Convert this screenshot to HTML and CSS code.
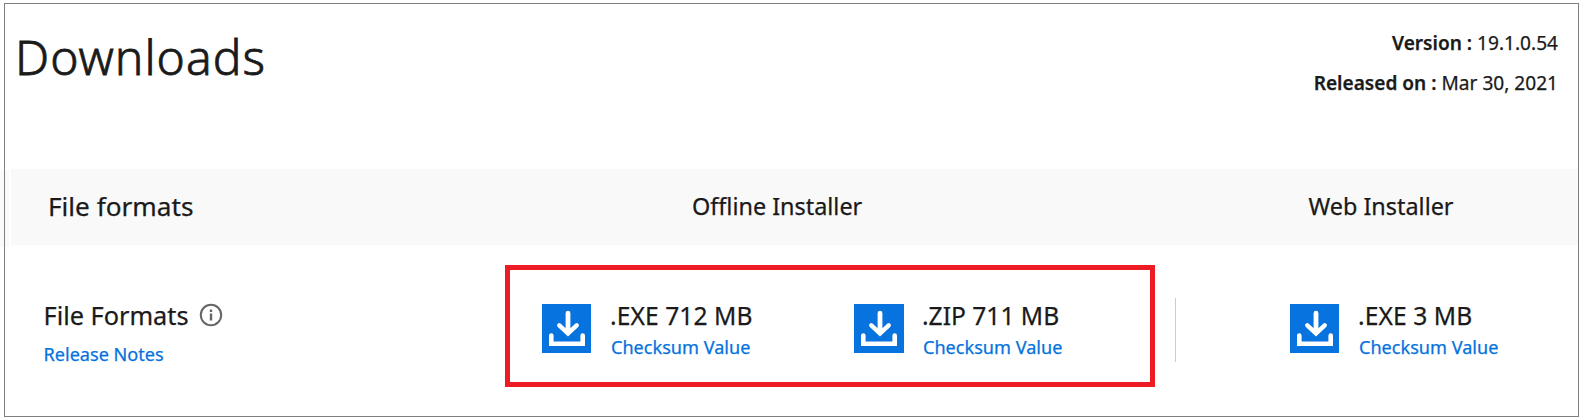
FILE: index.html
```html
<!DOCTYPE html>
<html lang="en">
<head>
<meta charset="utf-8">
<title>Downloads</title>
<link rel="stylesheet" href="styles.css">
</head>
<body>
<svg class="defs" aria-hidden="true">
  <symbol id="download" viewBox="0 0 49 49">
    <path d="M26 9.2V27" stroke="#fff" stroke-width="4.8" stroke-linecap="round" fill="none"/>
    <path d="M17.3 21.3 26 29.4 34.7 21.3" stroke="#fff" stroke-width="4.4" stroke-linecap="round" fill="none"/>
    <path d="M9.3 31.5V39.7H40.7V31.5" stroke="#fff" stroke-width="4.6" stroke-linecap="round" fill="none"/>
  </symbol>
</svg>
<main class="frame">
  <header class="header">
    <h1 class="title">Downloads</h1>
    <div class="meta">
      <div class="meta-line"><b>Version :</b> 19.1.0.54</div>
      <div class="meta-line released"><b>Released on :</b> Mar 30, 2021</div>
    </div>
  </header>
  <div class="band">
    <div class="band-formats">File formats</div>
    <div class="band-offline">Offline Installer</div>
    <div class="band-web">Web Installer</div>
  </div>
  <section class="row">
    <div class="formats">
      <div class="formats-name"><span class="formats-text">File Formats</span>
        <svg class="info" viewBox="0 0 24 24"><circle cx="12" cy="12" r="10.2" fill="none" stroke="#666" stroke-width="2"/><path d="M12 10.5V17.5M12 6.6V9" stroke="#666" stroke-width="2.4"/></svg>
      </div>
      <a class="link notes">Release Notes</a>
    </div>
    <div class="offline">
      <div class="item first">
        <svg class="icon"><use href="#download"/></svg>
        <div class="item-text"><div class="size exe">.EXE 712 MB</div><a class="link">Checksum Value</a></div>
      </div>
      <div class="item">
        <svg class="icon wide"><use href="#download"/></svg>
        <div class="item-text"><div class="size zip">.ZIP 711 MB</div><a class="link">Checksum Value</a></div>
      </div>
    </div>
    <div class="divider"></div>
    <div class="item web">
      <svg class="icon"><use href="#download"/></svg>
      <div class="item-text"><div class="size">.EXE 3 MB</div><a class="link">Checksum Value</a></div>
    </div>
  </section>
</main>
</body>
</html>
```
FILE: styles.css
```css
* { box-sizing: border-box; }
body {
  margin: 0;
  padding: 3px 4px;
  background: #fff linear-gradient(#fafafa, #fafafa) 0 171px / 9px 76px no-repeat;
  color: #1a1a1a;
  font-family: "Noto Sans", "Open Sans", sans-serif;
  -webkit-text-stroke: 0.25px currentColor;
  white-space: nowrap;
  overflow: hidden;
}
.defs { position: absolute; width: 0; height: 0; }
.icon, .info { -webkit-text-stroke: 0; }
.frame {
  width: 1575px;
  height: 414px;
  border: 1px solid #7f7f7f;
}
.header {
  display: flex;
  justify-content: space-between;
  height: 165px;
  padding: 22px 20px 0 10px;
}
.title {
  margin: 0;
  font-size: 48px;
  line-height: 62px;
  font-weight: 300;
  letter-spacing: 1px;
  -webkit-text-stroke-width: 0.8px;
}
.meta {
  margin-top: -3px;
  font-size: 19.1px;
  line-height: 40px;
  text-align: right;
}
.meta b { font-weight: 600; }
.band {
  display: flex;
  height: 76px;
  margin-left: 6px;
  background: #f9f9f9;
  font-size: 23.4px;
  line-height: 74px;
}
.band-formats { width: 681px; padding-left: 37px; font-size: 26.2px; line-height: 75px; }
.band-offline { width: 616.5px; }
.row { display: flex; }
.formats { width: 500px; padding: 50px 0 0 38.5px; }
.formats-name { display: flex; align-items: center; font-size: 25.3px; line-height: 40px; }
.info { width: 24px; height: 24px; margin-left: 10.5px; }
.link { display: block; color: #0672de; font-size: 18.1px; line-height: 26px; }
.notes { margin-top: 6px; }
.offline {
  display: flex;
  width: 650px;
  height: 122px;
  margin-top: 20px;
  padding: 34px 0 0 32px;
  border: 5px solid #ed1c24;
}
.item { display: flex; }
.first { width: 312px; }
.icon { flex: none; width: 49px; height: 49px; background: #0673df; }
.wide { width: 50px; }
.wide use { transform: translateX(-0.5px); }
.item-text { padding-left: 19px; }
.size { margin-top: -8px; font-size: 24.6px; line-height: 40px; letter-spacing: 0.08px; }
.zip { margin-left: -1px; letter-spacing: 0; }
.item .link { margin: -2px 0 0 1px; }
.item .zip + .link { margin-left: 0; }
.divider { width: 1px; height: 64px; margin: 53px 114px 0 20px; background: #ccc; }
.web { margin-top: 59px; }
```
